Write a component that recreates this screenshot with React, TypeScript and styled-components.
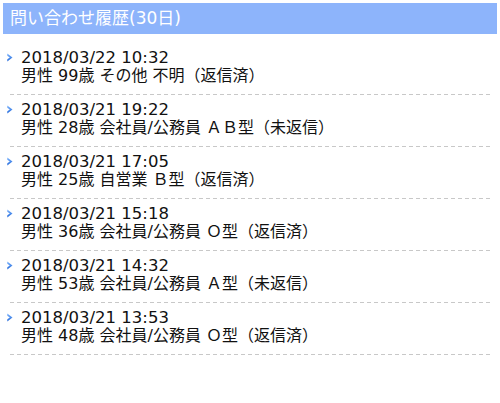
import React from "react";
import styled, { createGlobalStyle } from "styled-components";

const Global = createGlobalStyle`
  html, body { margin: 0; padding: 0; background: #fff; }
  body { font-family: "DejaVu Sans", "Noto Sans CJK JP", sans-serif; }
`;

const Page = styled.div`
  width: 500px;
  padding: 3px 3px 0;
  box-sizing: border-box;
`;

const Header = styled.div`
  height: 31px;
  background: #8db4fb;
  color: #fff;
  font-size: 17px;
  line-height: 31px;
  padding-left: 7px;
`;

const List = styled.ul`
  list-style: none;
  margin: 9px 0 0;
  padding: 0;
`;

const Row = styled.li`
  position: relative;
  margin: 0 7px;
  padding: 6px 0 10px 11px;
  color: #111;
  font-size: 16px;
  line-height: 18px;
  background-image: repeating-linear-gradient(to right, #c8c8c8 0 4px, transparent 4px 7px);
  background-size: 100% 1px;
  background-repeat: no-repeat;
  background-position: bottom left;
`;

const Arrow = styled.svg`
  position: absolute;
  left: -3px;
  top: 10px;
`;

const DateLine = styled.div`
  white-space: nowrap;
  font-size: 16.5px;
`;

const Line = styled.div`
  white-space: nowrap;
`;

const items = [
  ["2018/03/22 10:32", "男性 99歳 その他 不明（返信済）"],
  ["2018/03/21 19:22", "男性 28歳 会社員/公務員 ＡＢ型（未返信）"],
  ["2018/03/21 17:05", "男性 25歳 自営業 Ｂ型（返信済）"],
  ["2018/03/21 15:18", "男性 36歳 会社員/公務員 Ｏ型（返信済）"],
  ["2018/03/21 14:32", "男性 53歳 会社員/公務員 Ａ型（未返信）"],
  ["2018/03/21 13:53", "男性 48歳 会社員/公務員 Ｏ型（返信済）"],
];

export default function App() {
  return (
    <Page>
      <Global />
      <Header>問い合わせ履歴(30日)</Header>
      <List>
        {items.map(([d, t], i) => (
          <Row key={i}>
            <Arrow width="6" height="9" viewBox="0 0 6 9">
              <defs>
                <linearGradient id={`g${i}`} x1="0" y1="0" x2="0" y2="1">
                  <stop offset="0" stopColor="#7fb6ff" />
                  <stop offset="1" stopColor="#1f66d8" />
                </linearGradient>
              </defs>
              <path d="M0.3 0.5 L5.5 4.5 L0.3 8.5 L0.3 6.2 L2.8 4.5 L0.3 2.8 Z" fill={`url(#g${i})`} />
            </Arrow>
            <DateLine>{d}</DateLine>
            <Line>{t}</Line>
          </Row>
        ))}
      </List>
    </Page>
  );
}
